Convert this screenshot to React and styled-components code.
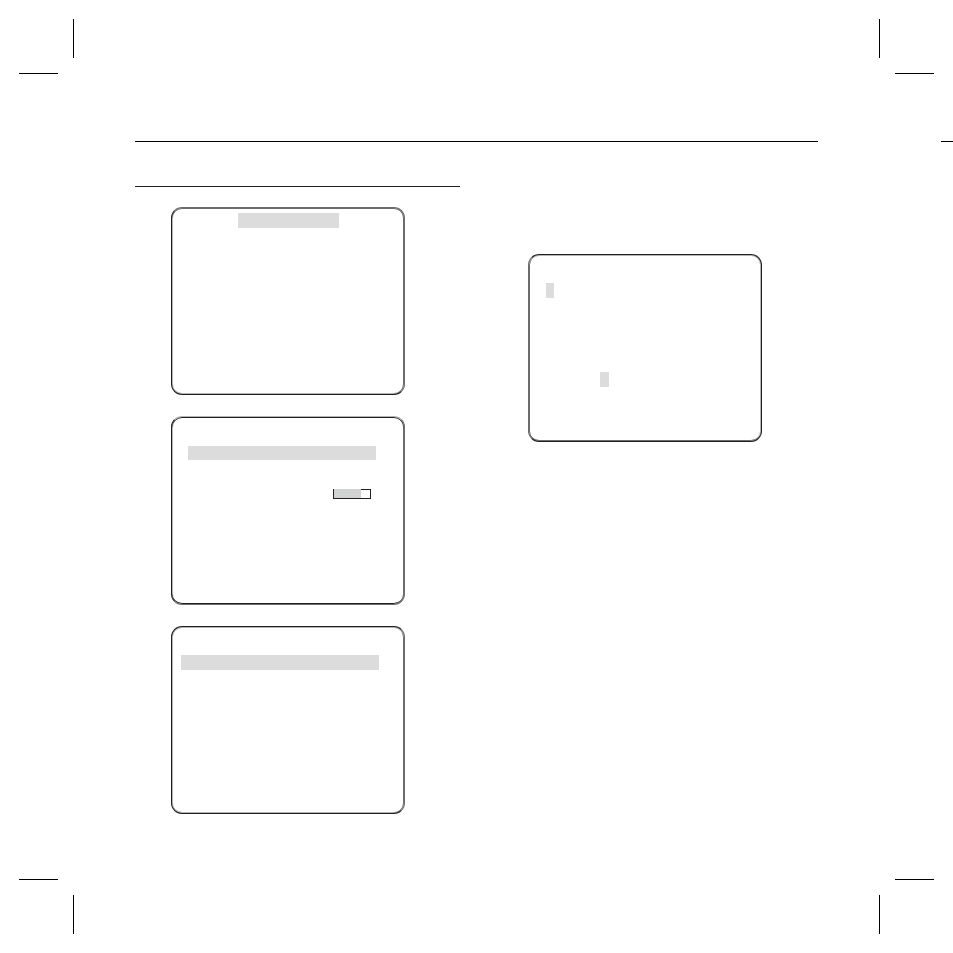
import { useState } from 'react';
import styled, { createGlobalStyle } from 'styled-components';

const INK = '#231f20';
const MID = '#6d6b6c';
const SOFT = '#b5b4b4';

const GlobalStyle = createGlobalStyle`
  * {
    box-sizing: border-box;
  }
  body {
    margin: 0;
    background: #ffffff;
    font-family: "Liberation Sans", Arial, sans-serif;
  }
`;

const Sheet = styled.div`
  display: flex;
  flex-direction: column;
  justify-content: space-between;
  min-height: 100vh;
  padding: 19px 0;
`;

const CropRow = styled.div`
  display: flex;
  justify-content: space-between;
  padding: 0 19px;
`;

const CropSvg = styled.svg`
  display: block;
  width: 55px;
  height: 55px;
  transform: rotate(${props => props.$turn}deg);
`;

const Content = styled.main`
  flex: 1;
  padding-top: 67px;
`;

const Header = styled.header`
  display: grid;
  grid-template-columns: 1fr 12px;
  column-gap: 123px;
  padding-left: 135px;
`;

const Rule = styled.hr`
  width: 100%;
  height: 1px;
  margin: 0;
  border: 0;
  background: ${props => props.$color || '#000000'};
`;

const Columns = styled.div`
  display: grid;
  grid-template-columns: 1fr 1fr;
  column-gap: 33px;
  padding: 44px 135px 0;
`;

const Screens = styled.div`
  display: flex;
  flex-direction: column;
  gap: 21px;
  padding: ${props => props.$pad};
`;

// each edge is a pair: outer line colour, inner line colour
const Screen = styled.section`
  display: flex;
  flex-direction: column;
  min-height: ${props => props.$height || 188}px;
  padding: ${props => props.$pad};
  border: 1px solid;
  border-color: ${props => props.$edges.map(edge => edge[0]).join(' ')};
  border-radius: 11px;
  box-shadow:
    inset 0 1px 0 ${props => props.$edges[0][1]},
    inset -1px 0 0 ${props => props.$edges[1][1]},
    inset 0 -1px 0 ${props => props.$edges[2][1]},
    inset 1px 0 0 ${props => props.$edges[3][1]};
`;

const Highlight = styled.div`
  width: ${props => props.$width || '100%'};
  height: ${props => props.$height || 15}px;
  background: #dcdcdc;
`;

const SecondHighlight = styled(Highlight)`
  margin: 74px 0 0 54px;
`;

const Level = styled.input`
  appearance: none;
  display: block;
  align-self: flex-end;
  width: 38px;
  height: 10px;
  margin: 29px 5px 0 0;
  border: 1px solid ${INK};
  border-top: 0;
  border-radius: 0;
  background:
    linear-gradient(to right, #d1d3d3 var(--level), ${INK} var(--level)) top / 100% 1px no-repeat,
    linear-gradient(to right, #d1d3d3 var(--level), #ffffff var(--level));

  &::-webkit-slider-thumb {
    appearance: none;
    width: 1px;
    height: 9px;
    background: transparent;
  }
`;

const EVEN = [MID, MID];
const OUTER = [INK, SOFT];
const INNER = [SOFT, INK];

const CropMark = ({ turn }) => (
  <CropSvg viewBox="0 0 55 55" $turn={turn} aria-hidden="true">
    <path d="M54 0h1v39h-1zM0 54h39v1H0z" fill="#000000" />
  </CropSvg>
);

const LevelBar = () => {
  const [level, setLevel] = useState(75);
  return (
    <Level
      type="range"
      aria-label="Level"
      min="0"
      max="100"
      value={level}
      onChange={e => setLevel(Number(e.target.value))}
      style={{ '--level': `${level}%` }}
    />
  );
};

export default function App() {
  return (
    <>
      <GlobalStyle />
      <Sheet>
        <CropRow>
          <CropMark turn={0} />
          <CropMark turn={90} />
        </CropRow>
        <Content>
          <Header>
            <Rule />
            <Rule />
          </Header>
          <Columns>
            <div>
              <Rule $color={INK} />
              <Screens $pad="20px 55px 0 36px">
                <Screen $edges={[EVEN, EVEN, OUTER, OUTER]} $pad="5px 65px 0 66px">
                  <Highlight />
                </Screen>
                <Screen $edges={[INNER, EVEN, [MID, INK], OUTER]} $height={189} $pad="29px 28px 0 16px">
                  <Highlight $height={14} />
                  <LevelBar />
                </Screen>
                <Screen $edges={[OUTER, EVEN, OUTER, OUTER]} $pad="28px 25px 0 9px">
                  <Highlight />
                </Screen>
              </Screens>
            </div>
            <Screens $pad="68px 56px 0 35px">
              <Screen $edges={[OUTER, OUTER, [INK, MID], EVEN]} $pad="28px 16px 0 17px">
                <Highlight $width="8px" />
                <SecondHighlight $width="9px" />
              </Screen>
            </Screens>
          </Columns>
        </Content>
        <CropRow>
          <CropMark turn={270} />
          <CropMark turn={180} />
        </CropRow>
      </Sheet>
    </>
  );
}
